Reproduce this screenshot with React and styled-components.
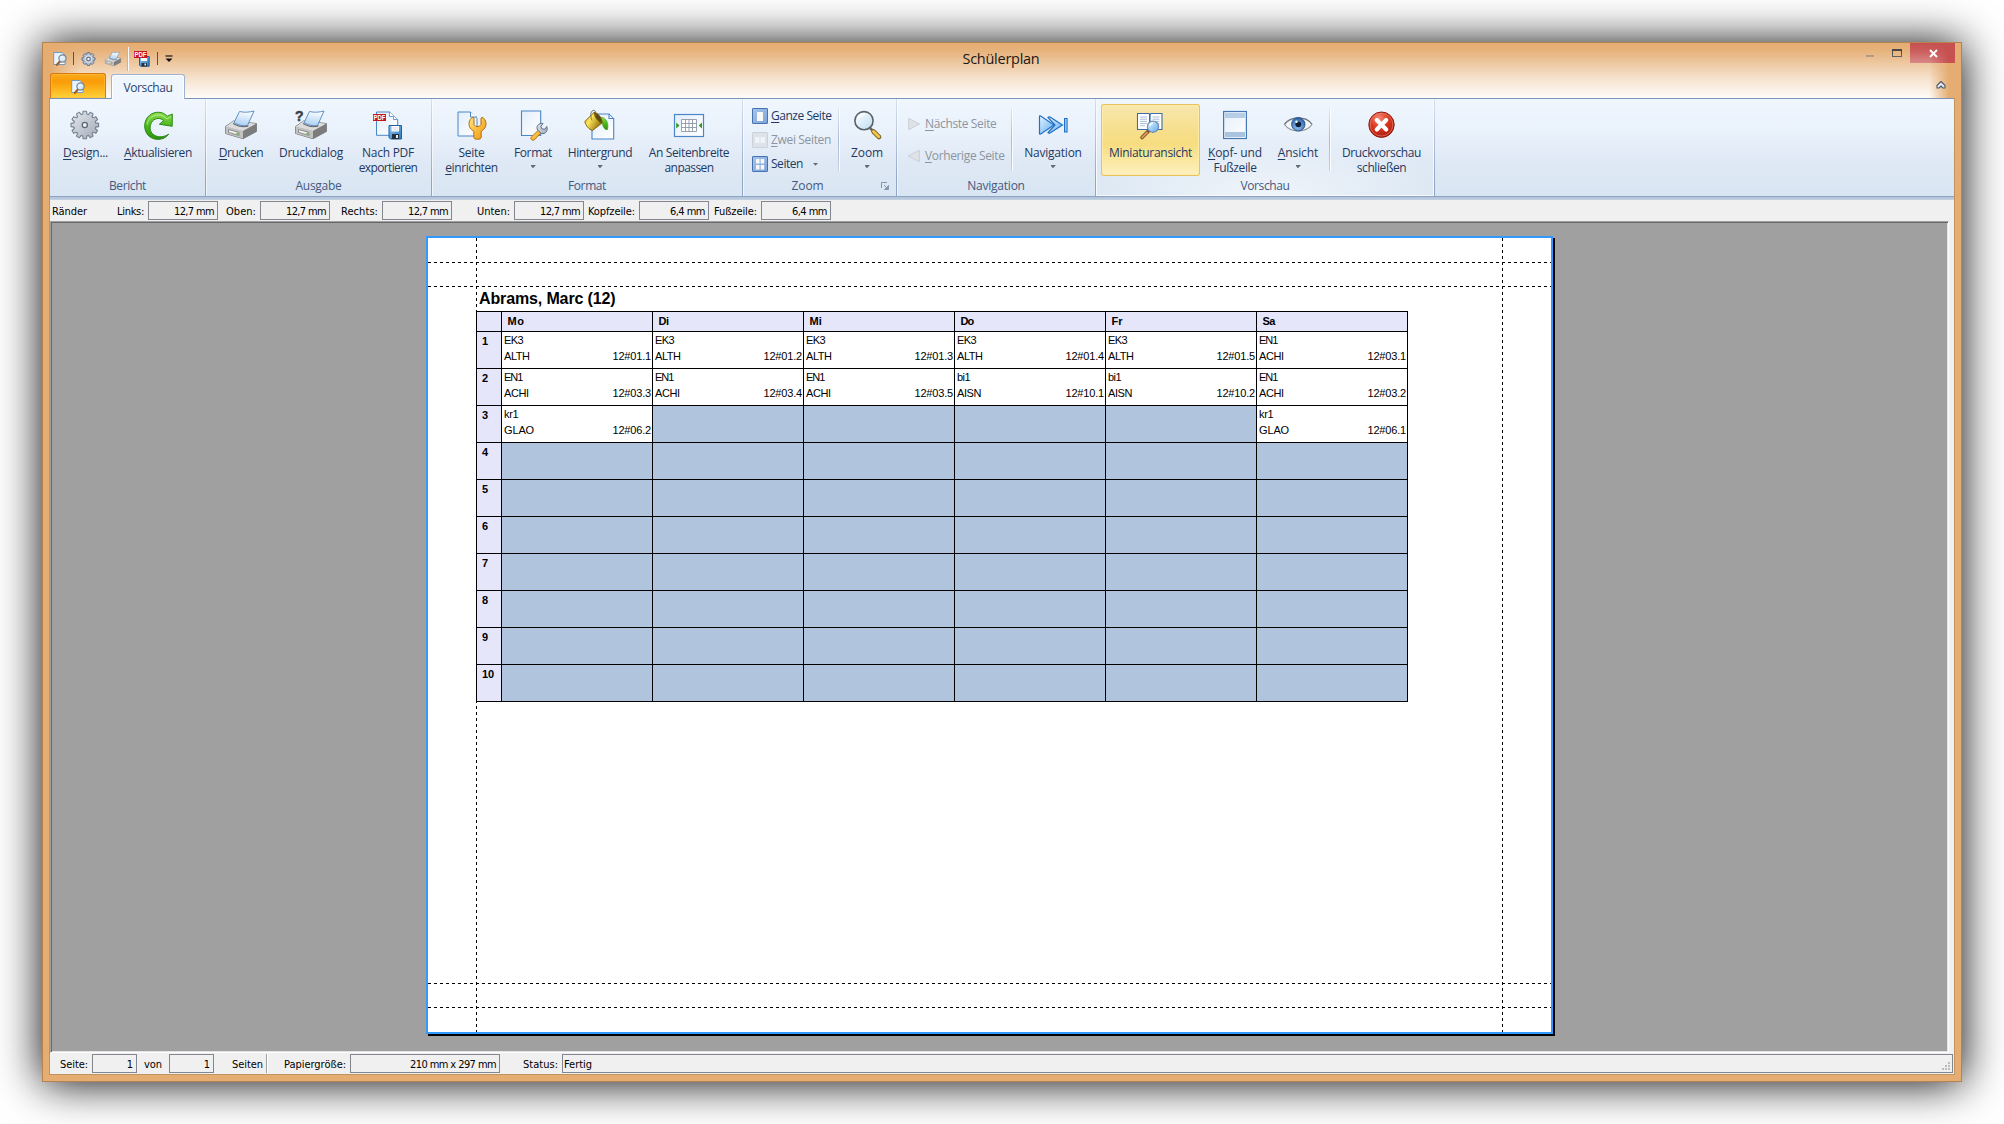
import React, { useLayoutEffect, useRef, useState } from "react";
import styled, { createGlobalStyle, css } from "styled-components";

const UI = `"Open Sans", "Noto Sans", sans-serif`;
const BAR = `"DejaVu Sans Condensed", "DejaVu Sans", sans-serif`;
const DOC = `"Liberation Sans", Arial, sans-serif`;

const Global = createGlobalStyle`
  * { box-sizing: border-box; }
  body { margin: 0; background: #fff; overflow: hidden; }
  svg { display: block; flex: none; overflow: visible; }
`;

/* ---------- text that is tracked to a set width ---------- */

const Run = styled.span`
  display: inline-block;
  white-space: pre;
`;
const Key = styled.span`
  text-decoration: underline;
  text-underline-offset: 2px;
  text-decoration-thickness: 1px;
`;

function Text({ w, children }) {
  const ref = useRef(null);
  const [track, setTrack] = useState(0);
  const plain = children.replace("&", "");
  useLayoutEffect(() => {
    if (!w) return;
    const natural = ref.current.getBoundingClientRect().width;
    setTrack((w - natural) / plain.length);
  }, []);
  const at = children.indexOf("&");
  return (
    <Run ref={ref} style={{ letterSpacing: track }}>
      {at < 0 ? plain : (
        <>
          {children.slice(0, at)}
          <Key>{children[at + 1]}</Key>
          {children.slice(at + 2)}
        </>
      )}
    </Run>
  );
}

/* ---------- window ---------- */

const Desktop = styled.main`
  width: 2004px;
  height: 1124px;
  padding: 42px;
  background: #fff;
`;
const Window = styled.section`
  width: 1920px;
  height: 1040px;
  display: flex;
  flex-direction: column;
  background: #e5ad72;
  border: 1px solid #b58350;
  box-shadow: 0 1px 42px 0 rgba(0, 0, 0, 0.98);
`;
const Header = styled.header`
  position: relative;
  height: 55px;
  flex: none;
`;
const Glow = styled.div`
  position: absolute;
  inset: 0 6px 0 7px;
  pointer-events: none;
  background: linear-gradient(
    to bottom,
    rgba(255, 255, 255, 0) 0,
    rgba(255, 255, 255, 0.08) 8px,
    rgba(255, 255, 255, 0.33) 20px,
    rgba(255, 255, 255, 0.66) 36px,
    rgba(255, 255, 255, 0.96) 55px
  );
  mask-image: linear-gradient(to right, transparent 0, #000 30px, #000 calc(100% - 26px), transparent calc(100% - 6px));
`;
const TitleRow = styled.div`
  height: 30px;
  display: grid;
  grid-template-columns: 1fr auto 1fr;
`;
const Quick = styled.div`
  position: relative;
  z-index: 1;
  display: flex;
  align-items: center;
  padding-left: 10px;
`;
const QuickItem = styled.span`
  width: 16px;
  margin-left: ${(p) => p.$gap || 0}px;
`;
const QuickRule = styled.span`
  width: ${(p) => (p.$wide ? 2 : 1)}px;
  height: ${(p) => (p.$wide ? 24 : 13)}px;
  margin-left: ${(p) => p.$gap}px;
  background: ${(p) => (p.$wide ? "linear-gradient(to right, #c9b39b 50%, #fff 50%)" : "#5f5245")};
`;
const Title = styled.h1`
  position: relative;
  z-index: 1;
  margin: 0;
  padding: 1px 2px 0 0;
  font: 400 14.5px/30px ${UI};
  color: #1c1712;
`;
const Controls = styled.div`
  display: flex;
  justify-content: flex-end;
  align-items: flex-start;
  padding-right: 6px;
`;
const Minimize = styled.span`
  width: 8px;
  height: 2px;
  margin: 12px 18px 0 0;
  background: #9a866f;
`;
const Maximize = styled.span`
  width: 10px;
  height: 8px;
  margin: 6px 8px 0 0;
  border: 1px solid #3d3a38;
  border-top-width: 2px;
`;
const CloseBox = styled.span`
  width: 45px;
  height: 20px;
  display: grid;
  place-items: center;
  padding-left: 1px;
  padding-top: 1px;
  background: #c75050;
`;
const TabRow = styled.div`
  position: relative;
  z-index: 1;
  height: 25px;
  display: flex;
  align-items: flex-end;
  padding: 0 15px 0 7px;
`;
const AppButton = styled.div`
  width: 56px;
  height: 25px;
  display: grid;
  place-items: center;
  padding: 2px 0 0 2px;
  border: 1px solid #d9780f;
  border-bottom: 0;
  border-radius: 3px 3px 0 0;
  background: linear-gradient(#fbab1a 0, #f99b08 30%, #fbad14 55%, #ffd33c 100%);
  box-shadow: inset 0 0 0 1px rgba(255, 190, 70, 0.6);
`;
const Tab = styled.div`
  width: 74px;
  height: 25px;
  margin: 0 auto -1px 5px;
  border: 1px solid #9db3cf;
  border-bottom: 0;
  border-radius: 3px 3px 0 0;
  background: #f0f6fe;
  box-shadow: inset 0 1px 0 #fff, inset 1px 0 0 #fff, inset -1px 0 0 #fff;
  font: 12px/26px ${UI};
  color: #2b4470;
  text-align: center;
`;
const Collapse = styled.span`
  align-self: center;
  padding-bottom: 1px;
`;
const Client = styled.div`
  flex: 1;
  display: flex;
  flex-direction: column;
  margin: 0 6px 6px;
  border: solid #c1935f;
  border-width: 0 1px 1px;
  background: #f0f0f0;
`;

/* ---------- ribbon ---------- */

const Ribbon = styled.div`
  height: 102px;
  flex: none;
  display: flex;
  border-top: 1px solid #7a93b7;
  background: linear-gradient(
    #eff6fe 0, #e9f1fb 34px, #dfe9f5 63px, #d8e5f2 97px,
    #8ea4c2 97px, #8ea4c2 98px, #b1c2d8 98px, #c3d2e4 101px
  );
`;
const Group = styled.section`
  width: ${(p) => p.$w}px;
  height: 97px;
  display: flex;
  flex-direction: column;
  border: solid;
  border-width: 0 1px 0 0;
  border-image: linear-gradient(#d6e0ee, #8fa5c4 85%) 1;
  box-shadow: 1px 0 0 rgba(255, 255, 255, 0.6);
  ${(p) =>
    p.$hot &&
    css`
      box-shadow: inset 1px -1px 0 #f6faff, inset -1px 0 0 #f6faff;
      background: radial-gradient(ellipse 60% 55% at 50% 100%, rgba(255, 255, 255, 0.6), transparent);
    `}
`;
const GroupBody = styled.div`
  height: 72px;
  margin-top: 5px;
  padding-left: ${(p) => p.$pad || 0}px;
  display: flex;
`;
const GroupLabel = styled.div`
  position: relative;
  margin-top: 1px;
  padding-right: ${(p) => (p.$launch ? 24 : 0)}px;
  font: 12px/18px ${UI};
  color: #45597f;
  text-align: center;
`;
const Launcher = styled.span`
  position: absolute;
  right: 7px;
  top: 5px;
`;
const BigButton = styled.div`
  width: ${(p) => p.$w}px;
  height: 72px;
  padding-top: 5px;
  display: flex;
  flex-direction: column;
  align-items: center;
  font: 12px/15px ${UI};
  color: #24395f;
  white-space: nowrap;
  ${(p) =>
    p.$active &&
    css`
      background: linear-gradient(#f8e8b0 0, #f6df8e 35%, #f7dd80 55%, #fbebaa 85%, #fcf0c0 100%);
      box-shadow: inset 0 0 0 1px #e8c25c, inset 0 0 0 2px rgba(255, 238, 170, 0.8);
      border-radius: 3px;
    `}
`;
const Lines = styled.div`
  margin-top: 4px;
  display: flex;
  flex-direction: column;
  align-items: center;
`;
const Arrow = styled.span`
  width: 5px;
  height: 3px;
  margin-top: ${(p) => p.$top || 0}px;
  margin-left: ${(p) => p.$left || 0}px;
  background: #626a76;
  clip-path: polygon(0 0, 100% 0, 100% 20%, 55% 100%, 45% 100%, 0 20%);
`;
const Divider = styled.span`
  width: 1px;
  height: 62px;
  margin: 5px ${(p) => p.$after || 0}px 0 ${(p) => p.$before || 0}px;
  background: linear-gradient(#dbe4f0, #a9bad2 50%, #c4d1e3);
  box-shadow: 1px 0 0 rgba(255, 255, 255, 0.8);
`;
const SmallList = styled.div`
  width: ${(p) => p.$w}px;
  padding: ${(p) => p.$top}px 0 0 ${(p) => p.$left}px;
  display: flex;
  flex-direction: column;
  gap: ${(p) => p.$gap}px;
`;
const SmallButton = styled.div`
  height: 16px;
  display: flex;
  align-items: center;
  gap: ${(p) => p.$gap || 3}px;
  font: 12px/16px ${UI};
  color: ${(p) => (p.$off ? "#8e949d" : "#24395f")};
`;

/* ---------- margin bar and status bar ---------- */

const Bar = styled.div`
  height: 21px;
  flex: none;
  display: flex;
  align-items: flex-start;
  padding: 1px 1px 0 0;
  font: 11px/21px ${BAR};
  color: #000;
`;
const BarLabel = styled.span`
  width: ${(p) => p.$w}px;
  height: 19px;
  padding-left: ${(p) => p.$left || 0}px;
  white-space: nowrap;
`;
const Field = styled.span`
  width: ${(p) => p.$w}px;
  height: 19px;
  padding: 0 3px 0 1px;
  border: 1px solid #82878f;
  line-height: 19px;
  text-align: right;
  white-space: nowrap;
`;
const StatusField = styled(Field)`
  flex: 1;
  display: flex;
  justify-content: space-between;
  padding-right: 2px;
`;
const GripBox = styled.span`
  align-self: flex-end;
  padding-bottom: 2px;
`;
const BarRule = styled.span`
  width: 2px;
  height: 19px;
  background: linear-gradient(to right, #a0a0a0 50%, #fff 50%);
`;

/* ---------- preview ---------- */

const Viewport = styled.div`
  width: 1899px;
  height: 832px;
  flex: none;
  padding: 14px 0 0 375px;
  background: #a0a0a0;
  border: 1px solid;
  border-color: #a0a0a0 #fff #fff #a0a0a0;
  box-shadow: inset 1px 1px 0 #696969, inset -1px -1px 0 #e3e3e3;
`;
const Sheet = styled.article`
  position: relative;
  width: 1127px;
  height: 798px;
  padding: 49px 0 0 48px;
  background: #fff;
  border: 2px solid #3399ff;
  box-shadow: 2px 2px 0 #000;
`;
const GuideH = styled.i`
  position: absolute;
  left: 0;
  right: 0;
  top: ${(p) => p.$at}px;
  height: 1px;
  background: repeating-linear-gradient(to right, #000 0 3px, transparent 3px 6px);
`;
const GuideV = styled.i`
  position: absolute;
  top: 0;
  bottom: 0;
  left: ${(p) => p.$at}px;
  width: 1px;
  background: repeating-linear-gradient(to bottom, #000 0 3px, transparent 3px 6px);
`;
const Pupil = styled.h2`
  height: 24px;
  margin: 0;
  padding-left: 3px;
  font: bold 16px/24px ${DOC};
  color: #000;
`;
const Plan = styled.div`
  position: relative;
  width: 932px;
  display: grid;
  grid-template-columns: 24px repeat(6, 150px);
  grid-template-rows: 19px;
  grid-auto-rows: 36px;
  gap: 1px;
  padding: 1px;
  background: #000;
  font-family: ${DOC};
  color: #000;
`;
const Head = styled.div`
  padding-left: 5.5px;
  background: #e6e6fa;
  font: bold 11px/19px ${DOC};
`;
const Period = styled.div`
  padding: 1px 0 0 5px;
  background: #e6e6fa;
  font: bold 11px/17px ${DOC};
`;
const Lesson = styled.div`
  padding: 0 1px 0 2px;
  background: ${(p) => (p.$free ? "#b0c4de" : "#fff")};
  font: 11px/16px ${DOC};
`;
const LessonRow = styled.div`
  display: flex;
  justify-content: space-between;
`;

/* ---------- icons ---------- */

function gearPath(cx, cy, ro, ri, n) {
  const pts = [];
  for (let i = 0; i < n; i++) {
    const a = (i / n) * Math.PI * 2 - Math.PI / 2;
    const s = Math.PI / n;
    [[-0.75, ri], [-0.45, ro], [0.45, ro], [0.75, ri]].forEach(([k, r]) => {
      pts.push(`${(cx + Math.cos(a + k * s) * r).toFixed(2)},${(cy + Math.sin(a + k * s) * r).toFixed(2)}`);
    });
  }
  return `M${pts.join("L")}Z`;
}

const Defs = () => (
  <svg width="0" height="0" style={{ position: "absolute" }}>
    <defs>
      <linearGradient id="steel" x1="0" y1="0" x2="1" y2="1">
        <stop offset="0" stopColor="#e6eaef" /><stop offset="0.5" stopColor="#c3c9d2" /><stop offset="1" stopColor="#a2aab6" />
      </linearGradient>
      <linearGradient id="green" x1="0" y1="0" x2="0" y2="1">
        <stop offset="0" stopColor="#8fdc52" /><stop offset="0.5" stopColor="#4cb81e" /><stop offset="1" stopColor="#2c8f12" />
      </linearGradient>
      <linearGradient id="paper" x1="0" y1="0" x2="1" y2="1">
        <stop offset="0" stopColor="#e2eefa" /><stop offset="1" stopColor="#ffffff" />
      </linearGradient>
      <linearGradient id="feed" x1="0.6" y1="0" x2="0.4" y2="1">
        <stop offset="0" stopColor="#ffffff" /><stop offset="1" stopColor="#a9cff3" />
      </linearGradient>
      <linearGradient id="gold" x1="0" y1="0" x2="1" y2="1">
        <stop offset="0" stopColor="#ffe98a" /><stop offset="0.5" stopColor="#f9bd3c" /><stop offset="1" stopColor="#ee941f" />
      </linearGradient>
      <linearGradient id="brass" x1="0" y1="0" x2="1" y2="0.6">
        <stop offset="0" stopColor="#c39a10" /><stop offset="0.4" stopColor="#ffe65a" /><stop offset="1" stopColor="#8f6c08" />
      </linearGradient>
      <linearGradient id="sky" x1="0" y1="0" x2="1" y2="1">
        <stop offset="0" stopColor="#e6f4ff" /><stop offset="1" stopColor="#5cabf0" />
      </linearGradient>
      <linearGradient id="lens" x1="0" y1="0" x2="1" y2="1">
        <stop offset="0" stopColor="#ffffff" /><stop offset="1" stopColor="#bcdcf3" />
      </linearGradient>
      <linearGradient id="tile" x1="0" y1="0" x2="1" y2="1">
        <stop offset="0" stopColor="#a9c5ea" /><stop offset="1" stopColor="#7ba3dc" />
      </linearGradient>
      <linearGradient id="flop" x1="0" y1="0" x2="1" y2="1">
        <stop offset="0" stopColor="#8cc6f2" /><stop offset="1" stopColor="#2a78be" />
      </linearGradient>
      <radialGradient id="red" cx="0.4" cy="0.25" r="0.8">
        <stop offset="0" stopColor="#f58a78" /><stop offset="0.45" stopColor="#dc3a22" /><stop offset="1" stopColor="#a8180c" />
      </radialGradient>
      <radialGradient id="iris" cx="0.45" cy="0.7" r="0.7">
        <stop offset="0" stopColor="#8fc0ee" /><stop offset="1" stopColor="#2a5fa6" />
      </radialGradient>
    </defs>
  </svg>
);

const Svg = ({ s = 32, v = 32, children }) => (
  <svg width={s} height={s} viewBox={`0 0 ${v} ${v}`} fill="none">{children}</svg>
);

const Gear = () => (
  <Svg>
    <path d={gearPath(14.800, 16, 13.900, 11, 12)} fill="url(#steel)" stroke="#76808f" strokeWidth="1.100" strokeLinejoin="round" />
    <circle cx="14.800" cy="16" r="2.600" fill="#e8edf4" stroke="#5d6878" strokeWidth="1.300" />
  </Svg>
);
const GearSmall = () => (
  <Svg s={16} v={16}>
    <path d={gearPath(7.500, 8, 6.600, 5.200, 8)} fill="#b4c0cf" stroke="#66758a" strokeWidth="1" strokeLinejoin="round" />
    <circle cx="7.500" cy="8" r="3.300" stroke="#dde5ee" strokeWidth="1" />
    <circle cx="7.500" cy="8" r="1.800" fill="#f2f5f9" stroke="#5c6c82" strokeWidth="1.100" />
  </Svg>
);
const Refresh = () => (
  <Svg>
    <path d="M26.700 25.200C22 31.500 12.500 32 6.800 27C1 21.500 1.500 11.500 7.200 6.600C12.800 1.800 20.800 2.300 25.400 7.200L30.300 5L30.200 17.300L17.400 15.200L21.600 11.700C18.500 8.500 13.600 8.800 10.600 12C6.800 16.500 7.400 23 12 26C16.500 28.800 22 28.200 26.700 25.200Z" fill="url(#green)" stroke="#2a8a14" strokeWidth="1" strokeLinejoin="round" />
    <path d="M5 15.500C6.500 7.500 15 3.500 22 7.500L25 10L28.800 7.500" stroke="#c4f29c" strokeOpacity="0.800" />
  </Svg>
);
const PrinterShape = () => (
  <>
    <path d="M0.600 17.500L8.500 12L31.400 14.500V22.500L18 29.700L0.600 24.500Z" fill="#a8a8a8" stroke="#6f6f6f" strokeWidth="0.900" strokeLinejoin="round" />
    <path d="M0.800 17.700L8.500 12L31.200 14.700L18 22Z" fill="#dcdcdc" />
    <path d="M0.800 17.800L18 22V29.500L0.800 24.400Z" fill="#c2c2c2" />
    <path d="M18 22L31.300 14.800V22.400L18 29.500Z" fill="#7c7c7c" />
    <path d="M3.500 20.600L14 23.400V26.400L3.500 23.400Z" fill="#f2f2f2" stroke="#6a6a6a" strokeWidth="0.700" />
    <path d="M11.500 23.600l2 .6v1.600l-2-.6z" fill="#53b52a" />
    <path d="M9 13.700L14.500 2.500C19 3.600 24 3.400 29 2L22.500 16.500C18 17.500 13 16 9 13.700Z" fill="url(#feed)" stroke="#4f86bd" strokeWidth="0.900" strokeLinejoin="round" />
    <path d="M8 14.500C13 17.500 18 18.500 23.500 17" stroke="#4a4a4a" strokeWidth="0.900" />
  </>
);
const Printer = ({ s }) => <Svg s={s}><PrinterShape /></Svg>;
const QMark = styled.text`
  font: 900 14px ${DOC};
`;
const PdfMark = styled.text`
  font: bold 6.5px ${DOC};
`;
const PrinterDialog = () => (
  <Svg>
    <PrinterShape />
    <QMark x="0" y="11.500" fill="#3f3f3f" stroke="#3f3f3f" strokeWidth="0.500">?</QMark>
  </Svg>
);
const Floppy = () => (
  <>
    <path d="M17 16.500H29.500V30H18.500L17 28.500Z" fill="url(#flop)" stroke="#1d5f9f" strokeWidth="1" />
    <path d="M19.500 17h7.500v5.500h-7.500z" fill="#fff" />
    <path d="M20.500 19h5.500M20.500 21h5.500" stroke="#c9c9c9" strokeWidth="0.700" />
    <path d="M20 25h7v5h-7z" fill="#23313f" />
    <path d="M24 26h2v3h-2z" fill="#e8eef4" />
  </>
);
const PdfExport = () => (
  <Svg>
    <path d="M4.500 3H17.500L25.700 10.500V26.300H4.500Z" fill="url(#paper)" stroke="#4c86c6" strokeWidth="1" />
    <path d="M17.500 3V7.500H21.500V10.500H25.500" fill="#fff" stroke="#4c86c6" strokeWidth="0.800" />
    <rect x="1" y="5" width="13" height="7" fill="#c8141c" />
    <PdfMark x="1.400" y="10.900" fill="#fff" textLength="12" lengthAdjust="spacingAndGlyphs">PDF</PdfMark>
    <Floppy />
  </Svg>
);
const PdfSmall = () => (
  <Svg s={16} v={16}>
    <path d="M5.500 5.500h9.700v9.700H6.500l-1-1z" fill="url(#flop)" stroke="#1d5f9f" />
    <path d="M7 6h6v4H7z" fill="#fff" />
    <path d="M7.500 12h5.500v3.500H7.500z" fill="#23313f" />
    <path d="M10.500 12.500h1.500v2h-1.500z" fill="#e8eef4" />
    <rect x="0" y="0" width="13" height="7" fill="#c8141c" />
    <PdfMark x="0.500" y="5.900" fill="#fff" textLength="12" lengthAdjust="spacingAndGlyphs">PDF</PdfMark>
  </Svg>
);
const PageSetup = () => (
  <Svg>
    <path d="M2 3H14.500L21 9.500V27H2Z" fill="url(#paper)" stroke="#4c86c6" strokeWidth="1" />
    <path d="M14.500 3V8H21" fill="#fff" stroke="#4c86c6" />
    <path d="M17 8.300C12.500 10 11.500 17 15.500 20.500L17.800 22.300V28.500Q18 30.300 21.500 30.300T25.200 28.500V22.300L27.500 20.500C31.500 17 30.500 10 26 8.300L25 9.200V15.500L23 17.500H20L18 15.500V9.200Z" fill="url(#gold)" stroke="#b4690f" strokeWidth="1" strokeLinejoin="round" />
  </Svg>
);
const FormatPage = () => (
  <Svg>
    <path d="M4.500 2H23.700V26.500H4.500Z" fill="url(#paper)" stroke="#4c86c6" strokeWidth="1.100" />
    <path d="M14.300 28L21.500 21L24.200 23.700L17.500 30.800Q15.500 32 14.300 30.500T14.300 28Z" fill="url(#gold)" stroke="#b4690f" strokeWidth="0.900" />
    <path d="M20.800 21.300C18.500 17.800 21.500 13.500 26 14.500L23.800 17.500L25 20L28 20.200L29.700 17.500C31.500 21.500 28.500 25.500 24.300 24.500Z" fill="url(#steel)" stroke="#5b6f8c" strokeWidth="1" strokeLinejoin="round" />
  </Svg>
);
const Bucket = () => (
  <Svg>
    <path d="M8 8V30H29.700V9.500H25V5H12Z" fill="url(#paper)" stroke="#4c86c6" strokeWidth="1.100" />
    <path d="M25 5L29.700 9.500" stroke="#4c86c6" />
    <path d="M14.500 8.500C20 7 25.500 12 23.500 20.500C21 21.500 19.500 18.500 18 14.500Z" fill="url(#green)" stroke="#3a9a1c" strokeWidth="0.600" />
    <path d="M0.800 12.500L10 3.500C13 3.500 18 9 18 14L8.500 21.500C5 20.500 2 17 0.800 12.500Z" fill="url(#brass)" stroke="#7a5a06" strokeWidth="0.900" />
    <path d="M10 3.500C13 3 18.500 9 18 14C14.500 13 10.500 8.500 10 3.500Z" fill="#5a4a10" stroke="#7a5a06" strokeWidth="0.700" />
    <path d="M8 11.500C5.500 5.500 7 1.500 10 1.200C11.500 1.500 12 4 12 7" stroke="#6b6b5a" strokeWidth="0.900" />
  </Svg>
);
const FitWidth = () => (
  <Svg>
    <rect x="1.500" y="5.500" width="29" height="22" fill="url(#paper)" stroke="#4c86c6" strokeWidth="1.200" />
    <path d="M8.500 10.500H23.500V22.500H8.500ZM12.500 10.500V22.500M16 10.500V22.500M19.500 10.500V22.500M8.500 14.500H23.500M8.500 18.500H23.500" stroke="#8d97a5" fill="#fff" strokeWidth="0.900" />
    <path d="M3.200 13.500V19.500L6.500 16.500ZM29 13.500V19.500L25.700 16.500Z" fill="#2f9a1e" />
  </Svg>
);
const Lens = () => (
  <Svg>
    <path d="M19 19L22 22" stroke="#666" strokeWidth="2.500" />
    <path d="M22.500 22.500L28 28" stroke="#80662c" strokeWidth="4.600" strokeLinecap="round" />
    <path d="M22.500 22.500L27.800 27.800" stroke="#f2c64c" strokeWidth="2.800" strokeLinecap="round" />
    <circle cx="13" cy="11.700" r="9.100" fill="url(#lens)" stroke="#5b6068" strokeWidth="1.600" />
    <path d="M7 10C8 6.500 11 5 14 5.200" stroke="#fff" strokeWidth="2" />
  </Svg>
);
const NextAll = () => (
  <Svg>
    <path d="M2.500 7.500Q2.500 6.500 3.700 7L17 16L3.700 25Q2.500 25.500 2.500 24.500Z" fill="url(#sky)" stroke="#2170c4" strokeWidth="1.200" />
    <path d="M11 8.500Q12 7.500 13 8L25.500 16L13 24Q12 24.500 11 23.500L18 16Z" fill="url(#sky)" stroke="#2170c4" strokeWidth="1.200" />
    <rect x="27.500" y="9.500" width="2.600" height="13.500" fill="#8cc6f5" stroke="#2170c4" strokeWidth="1" />
  </Svg>
);
const Book = () => (
  <Svg>
    <path d="M2.500 4.500H13.500Q14.500 4.500 15 5.500Q15.500 4.500 16.500 4.500H27V20.500H2.500Z" fill="#fff" stroke="#3f6ca8" strokeWidth="1.100" />
    <path d="M14.800 5V20.500" stroke="#3f6ca8" strokeWidth="1.600" />
    <path d="M5 8H12M5 10.200H12M5 12.400H12M5 14.600H12M5 16.800H10M17.500 8H24.500M17.500 10.200H24.500M20 12.400H24.500M22 14.600H24.500" stroke="#9fb6d4" strokeWidth="0.900" />
    <path d="M13.500 22L7 28.500" stroke="#7a4a20" strokeWidth="3.600" strokeLinecap="round" />
    <path d="M12 23.500L7 28.500" stroke="#d99a5c" strokeWidth="1.800" strokeLinecap="round" />
    <circle cx="18" cy="17.700" r="5.600" fill="url(#sky)" stroke="#6c8fb5" strokeWidth="1.300" />
    <path d="M14.500 16.700Q15.500 14.200 18 14.200" stroke="#fff" strokeWidth="1.500" />
  </Svg>
);
const HeadFoot = () => (
  <Svg>
    <rect x="4.600" y="2.500" width="22.800" height="27" fill="url(#paper)" stroke="#4577b5" strokeWidth="1.200" />
    <rect x="6" y="4" width="20" height="5" fill="#b7cde6" />
    <rect x="6" y="23" width="20" height="5" fill="#a9c3e1" />
  </Svg>
);
const Eye = () => (
  <Svg>
    <path d="M2.500 15.500C8 8 24 6.500 30 15.500C24 24 8.500 24 2.500 15.500Z" fill="#f4f6f8" stroke="#8c929b" strokeWidth="1.100" />
    <path d="M2.500 15.200C8.500 6.800 23.500 6.500 29.800 15" stroke="#6b727c" strokeWidth="1.200" />
    <circle cx="16.300" cy="15.300" r="6.700" fill="url(#iris)" stroke="#2c5288" strokeWidth="0.900" />
    <circle cx="16.300" cy="15.300" r="2.900" fill="#0b1f38" />
    <circle cx="14.500" cy="12.800" r="1.200" fill="#fff" />
  </Svg>
);
const StopIcon = () => (
  <Svg>
    <circle cx="15.500" cy="15.700" r="12.700" fill="url(#red)" stroke="#8e1a10" strokeWidth="1" />
    <circle cx="15.500" cy="15.700" r="11.300" stroke="#f0907f" strokeOpacity="0.600" />
    <path d="M10.800 11L20.200 20.400M20.200 11L10.800 20.400" stroke="#fff" strokeWidth="4.200" strokeLinecap="round" />
  </Svg>
);
const Preview = () => (
  <Svg s={16} v={16}>
    <path d="M0.700 1.500H9L12 4.500V13.500H0.700Z" fill="url(#paper)" stroke="#6f9bc9" />
    <path d="M7.500 9.800L4 13.800" stroke="#9a5f28" strokeWidth="2.200" strokeLinecap="round" />
    <circle cx="9.500" cy="7.500" r="3.600" fill="url(#lens)" stroke="#6f8299" strokeWidth="1.200" />
  </Svg>
);
const Tile = ({ kind }) => {
  const off = kind === "two";
  const cells = {
    one: [[5, 4, 6, 9]],
    two: [[3, 5, 4.500, 6], [8.500, 5, 4.500, 6]],
    four: [[4, 3, 3.500, 4.500], [8.700, 3, 3.500, 4.500], [4, 9, 3.500, 4.500], [8.700, 9, 3.500, 4.500]],
  }[kind];
  return (
    <Svg s={16} v={16}>
      <rect x="0.500" y="0.500" width="15" height="15" rx="0.500" fill={off ? "#dde2e8" : "url(#tile)"} stroke={off ? "#ccd2da" : "#4672b0"} />
      {cells.map(([x, y, w, h]) => (
        <rect key={`${x}-${y}`} x={x} y={y} width={w} height={h} rx="0.500" fill={off ? "#f1f3f6" : "#f7f8f4"} />
      ))}
    </Svg>
  );
};
const Step = ({ back }) => (
  <Svg s={14} v={14}>
    <path d={back ? "M12.300 1.300V12.700L1.200 7Z" : "M1.700 1.300V12.700L12.600 7Z"} fill="#dfe2e7" stroke="#c8ccd2" strokeWidth="0.900" strokeLinejoin="round" />
  </Svg>
);
const LaunchIcon = () => (
  <Svg s={8} v={8}>
    <path d="M0.500 6V0.500H6" stroke="#8696ad" />
    <path d="M3 3L6.500 6.500M7.500 3.500V7.500H3.500Z" fill="#8696ad" stroke="#8696ad" />
  </Svg>
);
const Cross = () => (
  <Svg s={9} v={9}>
    <path d="M1 1L8 8M8 1L1 8" stroke="#fff" strokeWidth="1.900" />
  </Svg>
);
const Chevron = () => (
  <Svg s={10} v={10}>
    <path d="M1 8V5.500L5 1.500L9 5.500V8H7L5 6L3 8Z" fill="#e8eef6" stroke="#4d5866" strokeWidth="1.100" strokeLinejoin="round" />
  </Svg>
);
const Grip = () => (
  <Svg s={8} v={8}>
    <path d="M6 0h2v2h-2zM3 3h2v2h-2zM6 3h2v2h-2zM0 6h2v2h-2zM3 6h2v2h-2zM6 6h2v2h-2z" fill="#bdbdbd" />
  </Svg>
);
const MoreIcon = () => (
  <Svg s={8} v={8}>
    <path d="M0.500 1H7.500" stroke="#111" strokeWidth="1.200" />
    <path d="M0.500 3.500H7.500L4 7Z" fill="#111" />
  </Svg>
);

/* ---------- data ---------- */

const DAYS = [["Mo", 17], ["Di", 10], ["Mi", 12.5], ["Do", 13], ["Fr", 11], ["Sa", 12.5]];
const WIDTHS = { EK3: 19, ALTH: 25.5, EN1: 18.5, ACHI: 24.5, bi1: 13, AISN: 24, kr1: 14.3, GLAO: 30 };
const LESSONS = [
  [["EK3", "ALTH", "12#01.1"], ["EK3", "ALTH", "12#01.2"], ["EK3", "ALTH", "12#01.3"], ["EK3", "ALTH", "12#01.4"], ["EK3", "ALTH", "12#01.5"], ["EN1", "ACHI", "12#03.1"]],
  [["EN1", "ACHI", "12#03.3"], ["EN1", "ACHI", "12#03.4"], ["EN1", "ACHI", "12#03.5"], ["bi1", "AISN", "12#10.1"], ["bi1", "AISN", "12#10.2"], ["EN1", "ACHI", "12#03.2"]],
  [["kr1", "GLAO", "12#06.2"], null, null, null, null, ["kr1", "GLAO", "12#06.1"]],
];
/* label, cell width, indent, label width, value, value width */
const MARGINS = [
  ["Links:", 62, 31, 27, "12,7 mm", 40],
  ["Oben:", 42, 8, 30, "12,7 mm", 40],
  ["Rechts:", 52, 11, 37, "12,7 mm", 40],
  ["Unten:", 62, 25, 33, "12,7 mm", 40],
  ["Kopfzeile:", 55, 4, 47, "6,4 mm", 35],
  ["Fußzeile:", 52, 5, 43, "6,4 mm", 35],
];

function Big({ w, icon, lines, drop, active }) {
  return (
    <BigButton $w={w} $active={active}>
      {icon}
      <Lines>
        {lines.map(([t, tw]) => <Text key={t} w={tw}>{t}</Text>)}
        {drop && <Arrow $top={5} />}
      </Lines>
    </BigButton>
  );
}

export default function App() {
  return (
    <Desktop>
      <Global />
      <Defs />
      <Window>
        <Header>
          <TitleRow>
            <Quick>
              <QuickItem><Preview /></QuickItem>
              <QuickRule $gap={4} />
              <QuickItem $gap={7}><GearSmall /></QuickItem>
              <QuickItem $gap={8}><Printer s={16} /></QuickItem>
              <QuickRule $wide $gap={6} />
              <QuickItem $gap={5}><PdfSmall /></QuickItem>
              <QuickRule $gap={7} />
              <QuickItem $gap={7}><MoreIcon /></QuickItem>
            </Quick>
            <Title><Text w={77}>Schülerplan</Text></Title>
            <Controls>
              <Minimize />
              <Maximize />
              <CloseBox><Cross /></CloseBox>
            </Controls>
          </TitleRow>
          <Glow />
          <TabRow>
            <AppButton><Preview /></AppButton>
            <Tab><Text w={49}>Vorschau</Text></Tab>
            <Collapse><Chevron /></Collapse>
          </TabRow>
        </Header>
        <Client>
          <Ribbon>
            <Group $w={156}>
              <GroupBody $pad={6}>
                <Big w={59} icon={<Gear />} lines={[["&Design...", 45]]} />
                <Big w={86} icon={<Refresh />} lines={[["&Aktualisieren", 68]]} />
              </GroupBody>
              <GroupLabel><Text w={37}>Bericht</Text></GroupLabel>
            </Group>
            <Group $w={226}>
              <GroupBody $pad={3}>
                <Big w={64} icon={<Printer />} lines={[["&Drucken", 44.5]]} />
                <Big w={76} icon={<PrinterDialog />} lines={[["Druckdialog", 64]]} />
                <Big w={78} icon={<PdfExport />} lines={[["Nach PDF", 52], ["exportieren", 58.5]]} />
              </GroupBody>
              <GroupLabel><Text w={46}>Ausgabe</Text></GroupLabel>
            </Group>
            <Group $w={311}>
              <GroupBody $pad={6}>
                <Big w={67} icon={<PageSetup />} lines={[["Seite", 26], ["&einrichten", 52.5]]} />
                <Big w={56} icon={<FormatPage />} lines={[["Format", 38]]} drop />
                <Big w={78} icon={<Bucket />} lines={[["Hintergrund", 64.5]]} drop />
                <Big w={100} icon={<FitWidth />} lines={[["An Seitenbreite", 80.5], ["anpassen", 49]]} />
              </GroupBody>
              <GroupLabel><Text w={38}>Format</Text></GroupLabel>
            </Group>
            <Group $w={154}>
              <GroupBody>
                <SmallList $w={95} $top={4} $left={9} $gap={8}>
                  <SmallButton><Tile kind="one" /><Text w={60.5}>&Ganze Seite</Text></SmallButton>
                  <SmallButton $off><Tile kind="two" /><Text w={60}>&Zwei Seiten</Text></SmallButton>
                  <SmallButton><Tile kind="four" /><Text w={32}>Seiten</Text><Arrow $left={7} /></SmallButton>
                </SmallList>
                <Divider />
                <Big w={56} icon={<Lens />} lines={[["Zoom", 32]]} drop />
              </GroupBody>
              <GroupLabel $launch>
                <Text w={32}>Zoom</Text>
                <Launcher><LaunchIcon /></Launcher>
              </GroupLabel>
            </Group>
            <Group $w={199}>
              <GroupBody>
                <SmallList $w={114} $top={12} $left={10} $gap={16}>
                  <SmallButton $off $gap={4}><Step /><Text w={71.5}>&Nächste Seite</Text></SmallButton>
                  <SmallButton $off $gap={4}><Step back /><Text w={79.5}>&Vorherige Seite</Text></SmallButton>
                </SmallList>
                <Divider />
                <Big w={82} icon={<NextAll />} lines={[["Navigation", 57.5]]} drop />
              </GroupBody>
              <GroupLabel><Text w={57.5}>Navigation</Text></GroupLabel>
            </Group>
            <Group $w={339} $hot>
              <GroupBody $pad={5}>
                <Big w={99} active icon={<Book />} lines={[["Miniaturansicht", 83]]} />
                <Big w={70} icon={<HeadFoot />} lines={[["&Kopf- und", 54], ["Fußzeile", 43]]} />
                <Big w={56} icon={<Eye />} lines={[["&Ansicht", 40.5]]} drop />
                <Divider $before={3} $after={4} />
                <Big w={95} icon={<StopIcon />} lines={[["Druckvorschau", 79], ["schließen", 49.5]]} />
              </GroupBody>
              <GroupLabel><Text w={49}>Vorschau</Text></GroupLabel>
            </Group>
          </Ribbon>
          <Bar>
            <BarLabel $w={36} $left={2}><Text w={35}>Ränder</Text></BarLabel>
            {MARGINS.map(([label, w, left, lw, value, vw]) => (
              <React.Fragment key={label}>
                <BarLabel $w={w} $left={left}><Text w={lw}>{label}</Text></BarLabel>
                <Field $w={70}><Text w={vw}>{value}</Text></Field>
              </React.Fragment>
            ))}
          </Bar>
          <Viewport>
            <Sheet>
              <GuideH $at={24} />
              <GuideH $at={48} />
              <GuideH $at={745} />
              <GuideH $at={769} />
              <GuideV $at={48} />
              <GuideV $at={1074} />
              <Pupil><Text w={136.5}>Abrams, Marc (12)</Text></Pupil>
              <Plan>
                <Head />
                {DAYS.map(([d, w]) => <Head key={d}><Text w={w}>{d}</Text></Head>)}
                {Array.from({ length: 10 }, (_, r) => (
                  <React.Fragment key={r}>
                    <Period>{r + 1}</Period>
                    {DAYS.map(([d], c) => {
                      const lesson = LESSONS[r]?.[c];
                      if (!lesson) return <Lesson key={d} $free />;
                      return (
                        <Lesson key={d}>
                          <LessonRow><Text w={WIDTHS[lesson[0]]}>{lesson[0]}</Text></LessonRow>
                          <LessonRow>
                            <Text w={WIDTHS[lesson[1]]}>{lesson[1]}</Text>
                            <Text w={38.5}>{lesson[2]}</Text>
                          </LessonRow>
                        </Lesson>
                      );
                    })}
                  </React.Fragment>
                ))}
              </Plan>
            </Sheet>
          </Viewport>
          <Bar>
            <BarLabel $w={42} $left={10}><Text w={28}>Seite:</Text></BarLabel>
            <Field $w={45}>1</Field>
            <BarLabel $w={32} $left={7}><Text w={18}>von</Text></BarLabel>
            <Field $w={45}>1</Field>
            <BarLabel $w={52} $left={18}><Text w={31}>Seiten</Text></BarLabel>
            <BarRule />
            <BarLabel $w={82} $left={16}><Text w={62}>Papiergröße:</Text></BarLabel>
            <Field $w={150}><Text w={86}>210 mm x 297 mm</Text></Field>
            <BarLabel $w={62} $left={23}><Text w={35}>Status:</Text></BarLabel>
            <StatusField><Text w={28}>Fertig</Text><GripBox><Grip /></GripBox></StatusField>
          </Bar>
        </Client>
      </Window>
    </Desktop>
  );
}
